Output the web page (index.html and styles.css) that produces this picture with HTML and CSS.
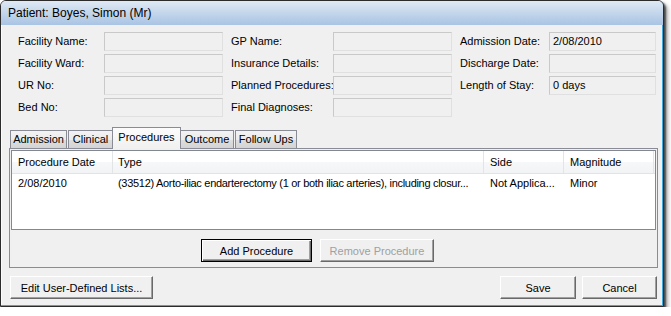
FILE: index.html
```html
<!DOCTYPE html>
<html lang="en">
<head>
<meta charset="UTF-8">
<title>Patient: Boyes, Simon (Mr)</title>
<link rel="stylesheet" href="styles.css">
</head>
<body>

<div class="window">
  <div class="titlebar">Patient: Boyes, Simon (Mr)</div>

  <div class="content">
    <div class="fields">
      <div class="label">Facility Name:</div>
      <div class="box"></div>
      <div class="label col">GP Name:</div>
      <div class="box"></div>
      <div class="label col">Admission Date:</div>
      <div class="box">2/08/2010</div>

      <div class="label">Facility Ward:</div>
      <div class="box"></div>
      <div class="label col">Insurance Details:</div>
      <div class="box"></div>
      <div class="label col">Discharge Date:</div>
      <div class="box"></div>

      <div class="label">UR No:</div>
      <div class="box"></div>
      <div class="label col">Planned Procedures:</div>
      <div class="box"></div>
      <div class="label col">Length of Stay:</div>
      <div class="box">0 days</div>

      <div class="label">Bed No:</div>
      <div class="box"></div>
      <div class="label col">Final Diagnoses:</div>
      <div class="box"></div>
      <div></div>
      <div></div>
    </div>

    <div class="tabs">
      <div class="tab t-admission">Admission</div>
      <div class="tab t-clinical">Clinical</div>
      <div class="tab selected t-procedures">Procedures</div>
      <div class="tab t-outcome">Outcome</div>
      <div class="tab t-followups">Follow Ups</div>
    </div>

    <div class="panel">
      <div class="listview">
        <div class="lv-head">
          <div class="cell c-date">Procedure Date</div>
          <div class="cell c-type">Type</div>
          <div class="cell c-side">Side</div>
          <div class="cell c-mag">Magnitude</div>
        </div>
        <div class="lv-row">
          <div class="cell c-date">2/08/2010</div>
          <div class="cell c-type tight">(33512) Aorto-iliac endarterectomy (1 or both iliac arteries), including closur...</div>
          <div class="cell c-side">Not Applica...</div>
          <div class="cell c-mag">Minor</div>
        </div>
      </div>
      <div class="panel-actions">
        <button class="btn default w-add">Add Procedure</button>
        <button class="btn w-remove" disabled>Remove Procedure</button>
      </div>
    </div>

    <div class="footer">
      <button class="btn w-edit">Edit User-Defined Lists...</button>
      <div class="footer-right">
        <button class="btn w-save">Save</button>
        <button class="btn w-cancel">Cancel</button>
      </div>
    </div>
  </div>
</div>

</body>
</html>
```

FILE: styles.css
```css
body {
  margin: 0;
  background: #fff;
  font-family: "Liberation Sans", Arial, sans-serif;
  font-size: 11px;
  color: #000;
}
.window {
  width: 664px;
  height: 307px;
  box-sizing: border-box;
  border: 1px solid #2b2b2b;
  border-radius: 6px 6px 0 0;
  background: #f0f0f0;
  overflow: hidden;
  box-shadow: inset -1px -1px 0 #3fa9dc, inset 1px 0 0 #fbfbfb,
    2px 2px 2px rgba(0,0,0,0.6), 4px 4px 4px rgba(0,0,0,0.3);
}
.titlebar {
  height: 24px;
  line-height: 24px;
  padding-left: 7px;
  font-size: 12px;
  background: linear-gradient(#dfe9f5, #c6d8ec 45%, #a9c4e3);
}
.content {
  padding: 7px 5px 0 8px;
}
.fields {
  display: grid;
  grid-template-columns: 86px 119px 110px 119px 97px 107px;
  grid-auto-rows: 19px;
  row-gap: 3px;
  margin-left: 9px;
}
.label {
  line-height: 19px;
  white-space: nowrap;
}
.label.col {
  padding-left: 8px;
}
.box {
  box-sizing: border-box;
  border: 1px solid;
  border-color: #c9c9c9 #e0e0e0 #e0e0e0 #c9c9c9;
  background: #f0f0f0;
  padding-left: 3px;
  line-height: 17px;
}

/* tabs */
.tabs {
  display: flex;
  align-items: flex-end;
  height: 21px;
  margin-top: 10px;
  padding-left: 1px;
}
.tab {
  box-sizing: border-box;
  height: 18px;
  border: 1px solid #898c95;
  border-bottom: none;
  background: linear-gradient(#f3f3f3, #ebebeb 50%, #dedede 50%, #d4d4d4);
  text-align: center;
  line-height: 17px;
  margin-right: 1px;
}
.tab.selected {
  position: relative;
  height: 22px;
  margin: 0 -1px -1px -2px;
  line-height: 18px;
  background: linear-gradient(#fcfcfc, #f0f0f0);
}
.t-admission { width: 57px; }
.t-clinical { width: 45px; }
.t-procedures { width: 69px; }
.t-outcome { width: 54px; }
.t-followups { width: 62px; }

.panel {
  box-sizing: border-box;
  height: 120px;
  border: 1px solid #898c95;
  padding: 1px;
  background: #f0f0f0;
}
.listview {
  box-sizing: border-box;
  height: 80px;
  border: 1px solid #828790;
  background: #fff;
}
.lv-head {
  display: flex;
  height: 22px;
  line-height: 22px;
  border-bottom: 1px solid #e2e3e5;
  background: linear-gradient(#fff 50%, #f7f8f9 50%, #f2f3f5);
}
.lv-head .cell {
  border-right: 1px solid #e3e4e6;
}
.lv-row {
  display: flex;
  height: 18px;
  line-height: 18px;
}
.cell {
  box-sizing: border-box;
  padding-left: 6px;
  white-space: nowrap;
}
.tight {
  letter-spacing: -0.3px;
}
.c-date { width: 101px; }
.c-type { width: 371px; padding-left: 5px; }
.c-side { width: 80px; }
.c-mag { width: 90px; }

/* buttons */
.btn {
  box-sizing: border-box;
  height: 23px;
  padding: 0;
  font: inherit;
  color: #000;
  background: #f0f0f0;
  border: 1px solid;
  border-color: #fff #696969 #696969 #fff;
  box-shadow: inset -1px -1px 0 #a0a0a0;
}
.btn.default {
  border: 1px solid #000;
  box-shadow: inset 1px 1px 0 #fff, inset -1px -1px 0 #696969, inset -2px -2px 0 #a0a0a0;
}
.btn:disabled {
  color: #a0a0a0;
}
.panel-actions {
  display: flex;
  gap: 8px;
  margin-top: 9px;
  padding-left: 190px;
}
.w-add { width: 111px; }
.w-remove { width: 114px; }

.footer {
  display: flex;
  justify-content: space-between;
  margin-top: 8px;
  padding: 0 1px;
}
.footer-right {
  display: flex;
  gap: 6px;
}
.w-edit { width: 143px; }
.w-save { width: 76px; }
.w-cancel { width: 75px; }
```
